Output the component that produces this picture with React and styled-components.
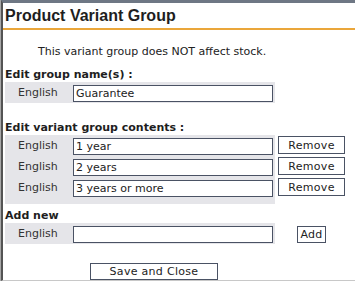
import React from "react";
import styled, { createGlobalStyle } from "styled-components";

const GlobalStyle = createGlobalStyle`
    html, body {
        margin: 0;
        padding: 0;
        background: #ffffff;
    }

    body {
        font-family: "DejaVu Sans", Verdana, sans-serif;
        font-size: 11px;
        color: #222;
    }
`;

const contents = ["1 year", "2 years", "3 years or more"];

const App = () => {
    return (
        <>
            <GlobalStyle />
            <Frame>
                <Header>
                    <Title>Product Variant Group</Title>
                </Header>

                <Note>This variant group does NOT affect stock.</Note>

                <SectionTitle $top={10}>Edit group name(s) :</SectionTitle>
                <Band>
                    <Panel>
                        <Row>
                            <LangCell>English</LangCell>
                            <InputCell>
                                <TextInput defaultValue="Guarantee" />
                            </InputCell>
                        </Row>
                    </Panel>
                </Band>

                <SectionTitle $top={18}>Edit variant group contents :</SectionTitle>
                <Band>
                    <Panel $extra={6}>
                        {contents.map((value) => (
                            <Row key={value}>
                                <LangCell>English</LangCell>
                                <InputCell>
                                    <TextInput defaultValue={value} />
                                </InputCell>
                            </Row>
                        ))}
                    </Panel>
                    <Actions $left={3}>
                        {contents.map((value) => (
                            <ActionSlot key={value}>
                                <Button $width={67} $height={18} $offset={1}>Remove</Button>
                            </ActionSlot>
                        ))}
                    </Actions>
                </Band>

                <SectionTitle $top={5}>Add new</SectionTitle>
                <Band>
                    <Panel>
                        <Row>
                            <LangCell>English</LangCell>
                            <InputCell>
                                <TextInput defaultValue="" />
                            </InputCell>
                        </Row>
                    </Panel>
                    <Actions $left={22}>
                        <ActionSlot>
                            <Button $width={29} $height={17} $offset={3}>Add</Button>
                        </ActionSlot>
                    </Actions>
                </Band>

                <Footer>
                    <Button $width={128} $height={17} $offset={0}>Save and Close</Button>
                </Footer>
            </Frame>
        </>
    );
};

// styled components
const Frame = styled.div`
    width: 352px;
    margin-left: 1px;
    border-top: 3px solid #6e7784;
    border-left: 2px solid #545454;
    box-shadow: -1px 0 0 #a8a8a8;
    border-bottom: 1px solid #c8c8c8;
`;

const Header = styled.div`
    height: 25px;
    border-bottom: 2px solid #eaa63a;
    padding-left: 2px;
`;

const Title = styled.h1`
    margin: 0;
    font-family: "Liberation Sans", Arial, sans-serif;
    font-size: 16px;
    font-weight: bold;
    line-height: 25px;
    color: #1e1e1e;
`;

const Note = styled.p`
    margin: 15px 0 0 35px;
    line-height: 13px;
    color: #222;
`;

const SectionTitle = styled.h2`
    margin: ${(p) => p.$top}px 0 1px 2px;
    font-size: 11px;
    font-weight: bold;
    line-height: 13px;
    color: #1e1e1e;
`;

const Band = styled.div`
    display: flex;
    align-items: flex-start;
    margin-left: 2px;
`;

const Panel = styled.div`
    width: 270px;
    background: #e5e5e9;
    padding-bottom: ${(p) => p.$extra || 0}px;
`;

const Row = styled.div`
    display: flex;
    align-items: center;
    height: 21px;
`;

const LangCell = styled.div`
    width: 55px;
    padding-left: 13px;
    color: #333;
    line-height: 13px;
`;

const InputCell = styled.div`
    width: 202px;
    padding-top: 2px;
`;

const TextInput = styled.input`
    box-sizing: border-box;
    width: 200px;
    height: 17px;
    margin: 0;
    padding: 0 2px;
    border: 1px solid #4a5264;
    background: #ffffff;
    font-family: "DejaVu Sans", Verdana, sans-serif;
    font-size: 11px;
    color: #222;
    outline: none;
`;

const Actions = styled.div`
    display: flex;
    flex-direction: column;
    margin-left: ${(p) => p.$left}px;
`;

const ActionSlot = styled.div`
    height: 21px;
`;

const Button = styled.button`
    box-sizing: border-box;
    display: block;
    width: ${(p) => p.$width}px;
    height: ${(p) => p.$height}px;
    margin: ${(p) => p.$offset}px 0 0 0;
    padding: 0;
    border: 1px solid #4a5264;
    background: #ffffff;
    font-family: "DejaVu Sans", Verdana, sans-serif;
    font-size: 11px;
    line-height: 13px;
    color: #222;
    letter-spacing: 0.3px;
`;

const Footer = styled.div`
    padding: 19px 0 0 87px;
`;

export default App;
